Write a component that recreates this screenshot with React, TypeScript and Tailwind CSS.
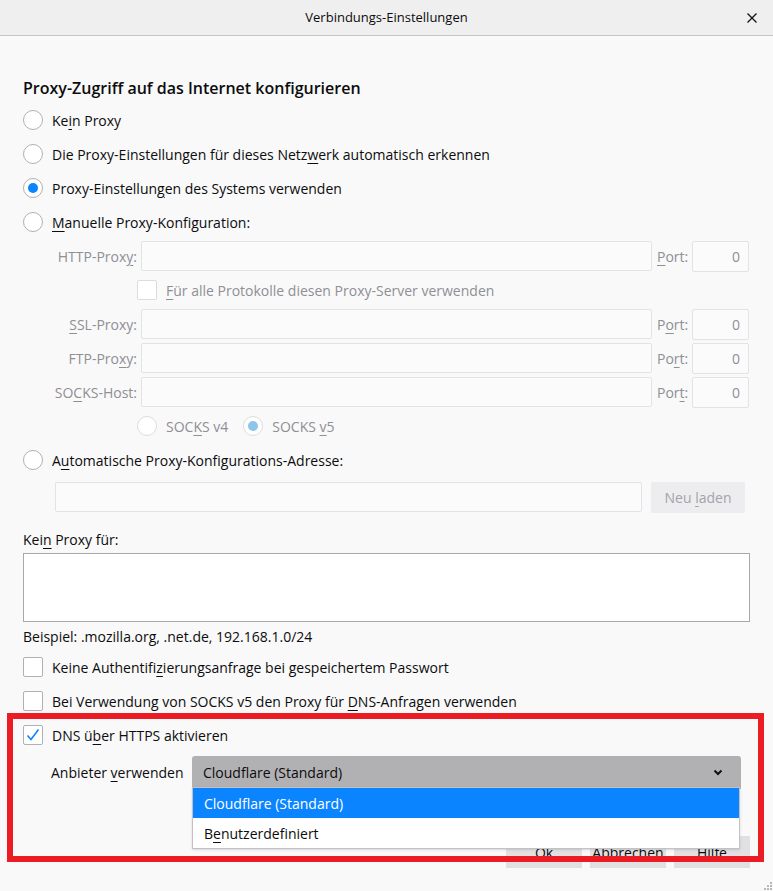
import React from "react";

const font = { fontFamily: '"Open Sans", "Noto Sans", sans-serif' };

function U({ children }: { children: React.ReactNode }) {
  return <span className="underline underline-offset-[3px] decoration-1">{children}</span>;
}

function Radio({ checked = false, disabled = false }: { checked?: boolean; disabled?: boolean }) {
  return (
    <div
      className={`flex h-[20px] w-[20px] shrink-0 items-center justify-center rounded-full border bg-white ${
        disabled ? "border-[#dcdcdf]" : "border-[#b1b1b3]"
      }`}
    >
      {checked && (
        <div className={`h-[10px] w-[10px] rounded-full ${disabled ? "bg-[#8ec5ec]" : "bg-[#0a84ff]"}`} />
      )}
    </div>
  );
}

function Checkbox({ checked = false, disabled = false }: { checked?: boolean; disabled?: boolean }) {
  return (
    <div
      className={`flex h-[20px] w-[20px] shrink-0 items-center justify-center rounded-[2px] border bg-white ${
        disabled ? "border-[#dcdcdf]" : "border-[#b1b1b3]"
      }`}
    >
      {checked && (
        <svg width="16" height="16" viewBox="0 0 16 16">
          <polyline points="2.5,8.5 6,12.5 13.5,2.5" fill="none" stroke="#0a84ff" strokeWidth="1.6" />
        </svg>
      )}
    </div>
  );
}

function ProxyRow({ label, port }: { label: React.ReactNode; port: React.ReactNode }) {
  return (
    <div className="flex h-[34px] items-center text-[#8f8f94]">
      <div className="w-[114px] text-right">{label}</div>
      <div className="ml-[4px] h-[30px] w-[511px] rounded-[2px] border border-[#e3e3e6] bg-[#fbfbfc]" />
      <div className="ml-[5px] w-[35px]">{port}</div>
      <div className="flex h-[31px] w-[57px] items-center justify-end rounded-[2px] border border-[#e3e3e6] bg-[#fbfbfc] pr-[8px]">
        0
      </div>
    </div>
  );
}

export default function App() {
  return (
    <div className="relative h-[891px] w-[773px] overflow-hidden bg-[#f9f9fa] text-[14px] text-[#0c0c0d]" style={font}>
      {/* Title bar */}
      <div className="relative flex h-[36px] items-center justify-center border-b border-[#c4c4c6] bg-[#efefef]">
        <span className="text-[13px]">Verbindungs-Einstellungen</span>
        <svg className="absolute right-[16px] top-[13px]" width="10" height="10" viewBox="0 0 10 10">
          <path d="M0.5 0.5 L9.5 9.5 M9.5 0.5 L0.5 9.5" stroke="#111" strokeWidth="1.3" />
        </svg>
      </div>

      <div className="px-[23px] pt-[37px]">
        <div className="flex h-[30px] items-center text-[16px] font-semibold">
          Proxy-Zugriff auf das Internet konfigurieren
        </div>

        <div className="flex h-[34px] items-center gap-[9px]">
          <Radio />
          <span>
            Ke<U>i</U>n Proxy
          </span>
        </div>
        <div className="flex h-[34px] items-center gap-[9px]">
          <Radio />
          <span>
            Die Proxy-Einstellungen für dieses Netz<U>w</U>erk automatisch erkennen
          </span>
        </div>
        <div className="flex h-[34px] items-center gap-[9px]">
          <Radio checked />
          <span>
            Proxy-Einstellun<U>g</U>en des Systems verwenden
          </span>
        </div>
        <div className="flex h-[34px] items-center gap-[9px]">
          <Radio />
          <span>
            <U>M</U>anuelle Proxy-Konfiguration:
          </span>
        </div>

        <ProxyRow
          label={
            <>
              HTTP-Prox<U>y</U>:
            </>
          }
          port={
            <>
              <U>P</U>ort:
            </>
          }
        />
        <div className="flex h-[34px] items-center gap-[9px] pl-[114px] text-[#8f8f94]">
          <Checkbox disabled />
          <span>
            <U>F</U>ür alle Protokolle diesen Proxy-Server verwenden
          </span>
        </div>
        <ProxyRow
          label={
            <>
              <U>S</U>SL-Proxy:
            </>
          }
          port={
            <>
              P<U>o</U>rt:
            </>
          }
        />
        <ProxyRow
          label={
            <>
              FTP-Pro<U>x</U>y:
            </>
          }
          port={
            <>
              Po<U>r</U>t:
            </>
          }
        />
        <ProxyRow
          label={
            <>
              SO<U>C</U>KS-Host:
            </>
          }
          port={
            <>
              Por<U>t</U>:
            </>
          }
        />

        <div className="flex h-[34px] items-center pl-[114px] text-[#8f8f94]">
          <Radio disabled />
          <span className="ml-[9px]">
            SOC<U>K</U>S v4
          </span>
          <div className="ml-[15px]">
            <Radio checked disabled />
          </div>
          <span className="ml-[9px]">
            SOCKS <U>v</U>5
          </span>
        </div>

        <div className="flex h-[34px] items-center gap-[9px]">
          <Radio />
          <span>
            A<U>u</U>tomatische Proxy-Konfigurations-Adresse:
          </span>
        </div>
        <div className="flex h-[40px] items-center pl-[32px]">
          <div className="h-[30px] w-[587px] rounded-[2px] border border-[#e3e3e6] bg-[#fbfbfc]" />
          <div className="ml-[9px] flex h-[31px] w-[94px] items-center justify-center rounded-[2px] bg-[#ededf0] text-[#a4a4a8]">
            <span>
              Neu <U>l</U>aden
            </span>
          </div>
        </div>

        <div className="mt-[8px] flex h-[28px] items-center">
          <span>
            Kei<U>n</U> Proxy für:
          </span>
        </div>
        <div className="h-[69px] w-[727px] border border-[#a9a9ad] bg-white" />
        <div className="flex h-[28px] items-center">Beispiel: .mozilla.org, .net.de, 192.168.1.0/24</div>

        <div className="flex h-[34px] items-center gap-[9px]">
          <Checkbox />
          <span>
            Keine Authentifi<U>z</U>ierungsanfrage bei gespeichertem Passwort
          </span>
        </div>
        <div className="flex h-[34px] items-center gap-[9px]">
          <Checkbox />
          <span>
            Bei Verwendung von SOCKS v5 den Proxy für <U>D</U>NS-Anfragen verwenden
          </span>
        </div>
        <div className="flex h-[34px] items-center gap-[9px]">
          <Checkbox checked />
          <span>
            DNS ü<U>b</U>er HTTPS aktivieren
          </span>
        </div>

        <div className="relative flex h-[40px] items-center pl-[28px]">
          <span className="w-[141px]">
            Anbieter <U>v</U>erwenden
          </span>
          <div className="flex h-[33px] w-[549px] items-center justify-between rounded-t-[3px] bg-[#b1b1b3] px-[11px]">
            <span>Cloudflare (Standard)</span>
            <svg width="10" height="7" viewBox="0 0 10 7" className="mr-[7px]">
              <path d="M1.5 1.5 L5 5 L8.5 1.5" fill="none" stroke="#111" strokeWidth="2" />
            </svg>
          </div>

          {/* Open dropdown list */}
          <div className="absolute left-[169px] top-[35px] z-20 w-[548px] border border-[#c2c2c6] bg-white shadow-sm">
            <div className="flex h-[30px] items-center bg-[#0a84ff] px-[11px] text-white">Cloudflare (Standard)</div>
            <div className="flex h-[30px] items-center px-[11px]">
              <span>
                B<U>e</U>nutzerdefiniert
              </span>
            </div>
          </div>
        </div>

        <div className="mt-[44px] flex justify-end gap-[8px]">
          <div className="flex h-[32px] w-[76px] items-center justify-center bg-[#e1e1e3]">Ok</div>
          <div className="flex h-[32px] w-[76px] items-center justify-center bg-[#e1e1e3]">Abbrechen</div>
          <div className="flex h-[32px] w-[76px] items-center justify-center bg-[#e1e1e3]">Hilfe</div>
        </div>
      </div>

      {/* Red highlight annotation */}
      <div className="pointer-events-none absolute left-[7px] top-[713px] z-30 h-[149px] w-[757px] border-[6px] border-[#ec1c24]" />

      {/* Resize grip */}
      <svg className="absolute bottom-[1px] right-[1px]" width="10" height="10" viewBox="0 0 10 10">
        <g fill="#b8b8bb">
          <rect x="8" y="2" width="2" height="2" />
          <rect x="5" y="5" width="2" height="2" />
          <rect x="8" y="5" width="2" height="2" />
          <rect x="2" y="8" width="2" height="2" />
          <rect x="5" y="8" width="2" height="2" />
          <rect x="8" y="8" width="2" height="2" />
        </g>
      </svg>
    </div>
  );
}
